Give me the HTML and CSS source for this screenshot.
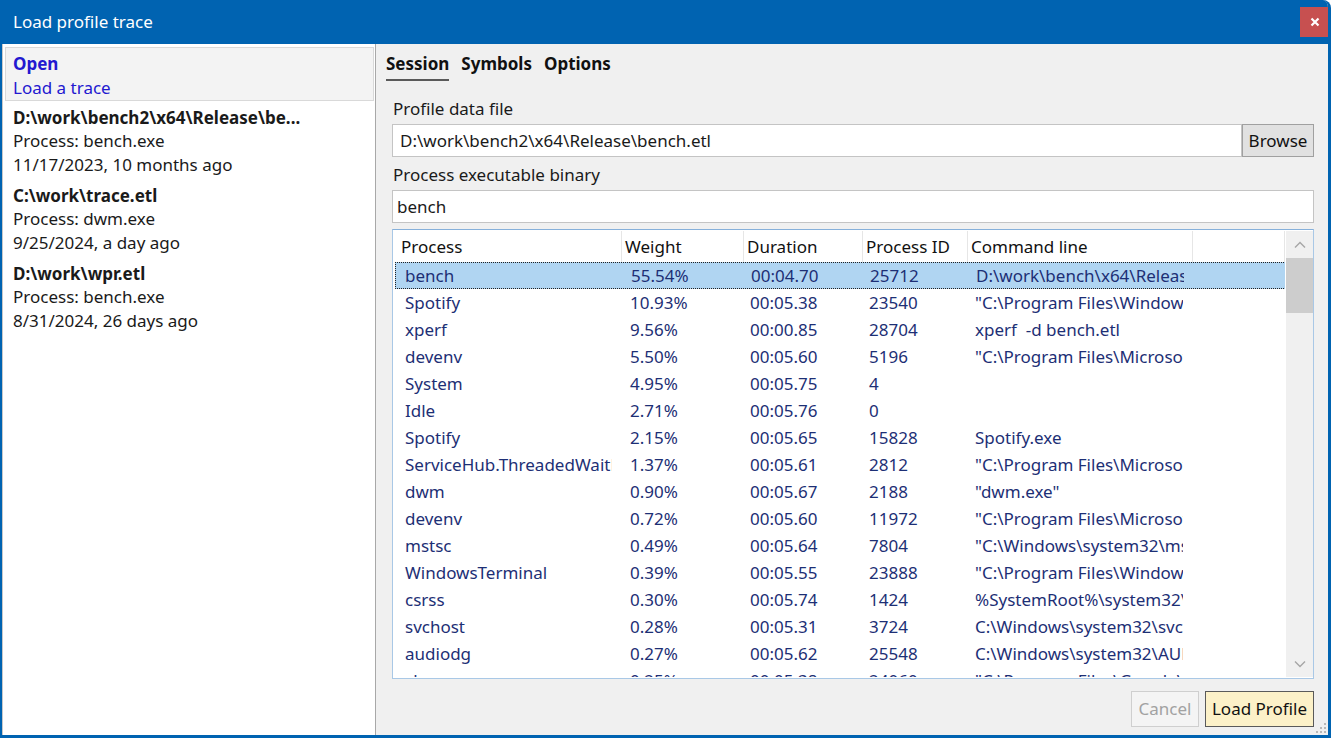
FILE: index.html
```html
<!DOCTYPE html>
<html lang="en">
<head>
<meta charset="utf-8">
<title>Load profile trace</title>
<link rel="stylesheet" href="styles.css">
</head>
<body>
<div class="window">
  <header class="titlebar">
    <span class="title">Load profile trace</span>
    <button class="close" aria-label="Close">
      <svg width="10" height="10" viewBox="0 0 10 10"><path d="M1.5 1.5 L8.5 8.5 M8.5 1.5 L1.5 8.5" stroke="#fff" stroke-width="2.2" fill="none"/></svg>
    </button>
  </header>
  <div class="body">
    <aside class="recent">
      <div class="recent-open">
        <div class="open-title">Open</div>
        <div class="open-sub">Load a trace</div>
      </div>
      <div class="recent-item">
        <div class="path">D:\work\bench2\x64\Release\be...</div>
        <div>Process: bench.exe</div>
        <div>11/17/2023, 10 months ago</div>
      </div>
      <div class="recent-item">
        <div class="path">C:\work\trace.etl</div>
        <div>Process: dwm.exe</div>
        <div>9/25/2024, a day ago</div>
      </div>
      <div class="recent-item">
        <div class="path">D:\work\wpr.etl</div>
        <div>Process: bench.exe</div>
        <div>8/31/2024, 26 days ago</div>
      </div>
    </aside>
    <main class="content">
      <nav class="tabs">
        <span class="tab active">Session</span>
        <span class="tab">Symbols</span>
        <span class="tab">Options</span>
      </nav>
      <div class="field-label first">Profile data file</div>
      <div class="file-row">
        <div class="input file-input">D:\work\bench2\x64\Release\bench.etl</div>
        <button class="browse">Browse</button>
      </div>
      <div class="field-label">Process executable binary</div>
      <div class="input bin-input">bench</div>
      <div class="table">
        <div class="table-main">
          <div class="row head">
            <div class="c c1">Process</div>
            <div class="c c2">Weight</div>
            <div class="c c3">Duration</div>
            <div class="c c4">Process ID</div>
            <div class="c c5">Command line</div>
            <div class="c c6"></div>
          </div>
          <div class="tbody">
            <div class="row data selected"><div class="c c1">bench</div><div class="c c2">55.54%</div><div class="c c3">00:04.70</div><div class="c c4">25712</div><div class="c c5">D:\work\bench\x64\Release\bench.exe</div><div class="c c6"></div></div>
            <div class="row data"><div class="c c1">Spotify</div><div class="c c2">10.93%</div><div class="c c3">00:05.38</div><div class="c c4">23540</div><div class="c c5">"C:\Program Files\WindowsApps\Spotify.exe"</div><div class="c c6"></div></div>
            <div class="row data"><div class="c c1">xperf</div><div class="c c2">9.56%</div><div class="c c3">00:00.85</div><div class="c c4">28704</div><div class="c c5">xperf&nbsp; -d bench.etl</div><div class="c c6"></div></div>
            <div class="row data"><div class="c c1">devenv</div><div class="c c2">5.50%</div><div class="c c3">00:05.60</div><div class="c c4">5196</div><div class="c c5">"C:\Program Files\Microsoft Visual Studio\devenv.exe"</div><div class="c c6"></div></div>
            <div class="row data"><div class="c c1">System</div><div class="c c2">4.95%</div><div class="c c3">00:05.75</div><div class="c c4">4</div><div class="c c5"></div><div class="c c6"></div></div>
            <div class="row data"><div class="c c1">Idle</div><div class="c c2">2.71%</div><div class="c c3">00:05.76</div><div class="c c4">0</div><div class="c c5"></div><div class="c c6"></div></div>
            <div class="row data"><div class="c c1">Spotify</div><div class="c c2">2.15%</div><div class="c c3">00:05.65</div><div class="c c4">15828</div><div class="c c5">Spotify.exe</div><div class="c c6"></div></div>
            <div class="row data"><div class="c c1">ServiceHub.ThreadedWaitDialog</div><div class="c c2">1.37%</div><div class="c c3">00:05.61</div><div class="c c4">2812</div><div class="c c5">"C:\Program Files\Microsoft Visual Studio"</div><div class="c c6"></div></div>
            <div class="row data"><div class="c c1">dwm</div><div class="c c2">0.90%</div><div class="c c3">00:05.67</div><div class="c c4">2188</div><div class="c c5">"dwm.exe"</div><div class="c c6"></div></div>
            <div class="row data"><div class="c c1">devenv</div><div class="c c2">0.72%</div><div class="c c3">00:05.60</div><div class="c c4">11972</div><div class="c c5">"C:\Program Files\Microsoft Visual Studio"</div><div class="c c6"></div></div>
            <div class="row data"><div class="c c1">mstsc</div><div class="c c2">0.49%</div><div class="c c3">00:05.64</div><div class="c c4">7804</div><div class="c c5">"C:\Windows\system32\mstsc.exe"</div><div class="c c6"></div></div>
            <div class="row data"><div class="c c1">WindowsTerminal</div><div class="c c2">0.39%</div><div class="c c3">00:05.55</div><div class="c c4">23888</div><div class="c c5">"C:\Program Files\WindowsApps\Terminal"</div><div class="c c6"></div></div>
            <div class="row data"><div class="c c1">csrss</div><div class="c c2">0.30%</div><div class="c c3">00:05.74</div><div class="c c4">1424</div><div class="c c5">%SystemRoot%\system32\csrss.exe</div><div class="c c6"></div></div>
            <div class="row data"><div class="c c1">svchost</div><div class="c c2">0.28%</div><div class="c c3">00:05.31</div><div class="c c4">3724</div><div class="c c5">C:\Windows\system32\svchost.exe</div><div class="c c6"></div></div>
            <div class="row data"><div class="c c1">audiodg</div><div class="c c2">0.27%</div><div class="c c3">00:05.62</div><div class="c c4">25548</div><div class="c c5">C:\Windows\system32\AUDIODG.EXE</div><div class="c c6"></div></div>
            <div class="row data"><div class="c c1">chrome</div><div class="c c2">0.25%</div><div class="c c3">00:05.38</div><div class="c c4">24060</div><div class="c c5">"C:\Program Files\Google\Chrome"</div><div class="c c6"></div></div>
          </div>
        </div>
        <div class="scrollbar">
          <div class="sb-btn">
            <svg width="12" height="8" viewBox="0 0 12 8"><path d="M1 6.5 L6 1.5 L11 6.5" stroke="#a6a6a6" stroke-width="1.4" fill="none"/></svg>
          </div>
          <div class="sb-track"><div class="sb-thumb"></div></div>
          <div class="sb-btn">
            <svg width="12" height="8" viewBox="0 0 12 8"><path d="M1 1.5 L6 6.5 L11 1.5" stroke="#a6a6a6" stroke-width="1.4" fill="none"/></svg>
          </div>
        </div>
      </div>
      <div class="actions">
        <button class="btn cancel">Cancel</button>
        <button class="btn primary">Load Profile</button>
      </div>
    </main>
  </div>
  <svg class="grip" width="12" height="12" viewBox="0 0 12 12">
    <g fill="#b8b8b8">
      <rect x="9" y="1" width="2" height="2"/>
      <rect x="5" y="5" width="2" height="2"/><rect x="9" y="5" width="2" height="2"/>
      <rect x="1" y="9" width="2" height="2"/><rect x="5" y="9" width="2" height="2"/><rect x="9" y="9" width="2" height="2"/>
    </g>
  </svg>
</div>
</body>
</html>
```

FILE: styles.css
```css
* { box-sizing: border-box; }
html, body { margin: 0; padding: 0; background: #ffffff; }
body {
  font-family: "Noto Sans", "Segoe UI", sans-serif;
  font-size: 17px;
  color: #1a1a1a;
}
button { font-family: inherit; font-size: inherit; }

.window {
  position: relative;
  width: 1331px;
  height: 738px;
  background: #f0f0f0;
  border-style: solid;
  border-color: #0063b1;
  border-width: 0 3px 3px 2px;
  border-top-right-radius: 8px;
  display: flex;
  flex-direction: column;
  overflow: hidden;
}

.titlebar {
  height: 44px;
  flex: none;
  background: #0063b1;
  display: flex;
  align-items: center;
  justify-content: space-between;
  padding: 0 0 0 11px;
}
.title {
  color: #ffffff;
  font-size: 17px;
  line-height: 24px;
}
.close {
  width: 30px;
  height: 30px;
  margin: 0 -2px 0 0;
  border: none;
  padding: 0;
  background: #c75050;
  display: flex;
  align-items: center;
  justify-content: center;
}

.body {
  flex: 1;
  display: flex;
  min-height: 0;
}

.recent {
  width: 374px;
  flex: none;
  background: #ffffff;
  border-left: 1px solid #c8c8c8;
  border-right: 1px solid #a8a8a8;
  padding: 3px 1px 0 2px;
  line-height: 24px;
}
.recent-open {
  background: #f3f3f3;
  border: 1px solid #d9d9d9;
  padding: 4px 7px 0 7px;
  color: #2318d0;
}
.open-title { font-weight: bold; }
.recent-item {
  padding: 4px 8px 2px;
  color: #1a1a1a;
}
.recent-item .path { font-weight: bold; line-height: 25px; margin-bottom: -1px; }

.content {
  flex: 1;
  display: flex;
  flex-direction: column;
  padding: 0 14px 8px 16px;
  min-width: 0;
}

.tabs {
  display: flex;
  gap: 12px;
  margin-left: -6px;
  padding-top: 8px;
}
.tab {
  font-weight: bold;
  line-height: 24px;
  padding-bottom: 3px;
  border-bottom: 2px solid transparent;
  color: #111;
}
.tab.active { border-bottom-color: #5a5a5a; }

.field-label {
  line-height: 24px;
  margin-top: 6px;
  margin-bottom: 3px;
  padding-left: 1px;
}
.field-label.first { margin-top: 16px; }

.file-row { display: flex; }
.input {
  height: 33px;
  background: #ffffff;
  border: 1px solid #c4c4c4;
  line-height: 31px;
  white-space: nowrap;
  overflow: hidden;
}
.file-input { flex: 1; padding-left: 7px; }
.bin-input { padding-left: 4px; }
.browse {
  width: 72px;
  height: 33px;
  background: #e1e1e1;
  border: 1px solid #a0a0a0;
  color: #111;
  padding: 0;
}

.table {
  margin-top: 6px;
  flex: 1;
  min-height: 0;
  display: flex;
  background: #ffffff;
  border: 1px solid #a9c8e6;
  border-top-color: #86b0da;
  padding: 1px 0 1px 1px;
}
.table-main {
  flex: 1;
  display: flex;
  flex-direction: column;
  min-width: 0;
}
.row {
  display: grid;
  grid-template-columns: 228px 122px 119px 105px 225px 92px;
}
.head { height: 31px; flex: none; }
.head .c {
  line-height: 32px;
  border-right: 1px solid #e6e6e6;
  color: #111;
  padding-left: 3px;
}
.head .c1 { padding-left: 7px; }
.tbody {
  flex: 1;
  overflow: hidden;
}
.c {
  white-space: nowrap;
  overflow: hidden;
}
.data {
  height: 27px;
  line-height: 28px;
  color: #1d2f75;
}
.data .c { margin-right: 10px; }
.data .c1 { padding-left: 11px; }
.data .c2 { padding-left: 8px; }
.data .c3 { padding-left: 6px; }
.data .c4 { padding-left: 6px; }
.data .c5 { padding-left: 7px; }
.data.selected {
  background: #b0d5f2;
  outline: 1px dotted #222;
  outline-offset: -1px;
  margin-left: 1px;
  width: 891px;
}
.data.selected .c1 { padding-left: 10px; }

.scrollbar {
  width: 28px;
  flex: none;
  background: #f0f0f0;
  display: flex;
  flex-direction: column;
  border-left: 1px solid #ffffff;
}
.sb-btn {
  height: 27px;
  flex: none;
  display: flex;
  align-items: center;
  justify-content: center;
}
.sb-track { flex: 1; }
.sb-thumb {
  height: 55px;
  background: #cdcdcd;
}

.actions {
  display: flex;
  justify-content: flex-end;
  gap: 6px;
  margin-top: 12px;
}
.btn {
  height: 36px;
  padding: 0 4px;
  line-height: 34px;
}
.cancel {
  width: 68px;
  background: #f4f4f4;
  border: 1px solid #cfcfcf;
  color: #a2a2a2;
}
.primary {
  width: 109px;
  background: #fcf1c8;
  border: 1px solid #5a5a5a;
  color: #111;
}

.grip {
  position: absolute;
  right: 1px;
  bottom: 1px;
}
```
